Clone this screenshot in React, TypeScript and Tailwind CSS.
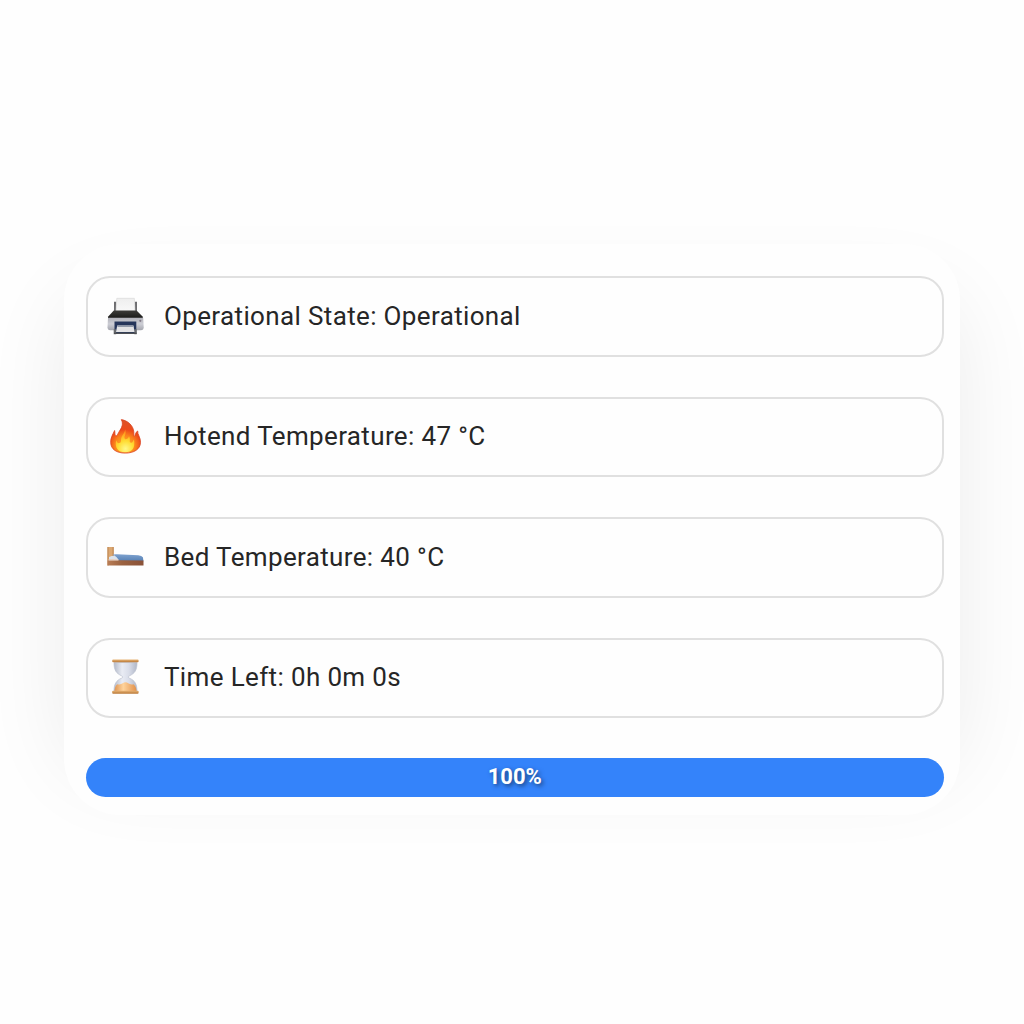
import type { ReactNode } from "react";

function PrinterIcon() {
  return (
    <svg viewBox="0 0 50 50" className="block size-[50px]" aria-hidden="true">
      <defs>
        <linearGradient id="printer-paper" x1="0" y1="0" x2="0" y2="1">
          <stop offset="0" stopColor="#eeeeee" />
          <stop offset="1" stopColor="#f8f8f8" />
        </linearGradient>
        <linearGradient id="printer-lid" x1="0" y1="0" x2="0" y2="1">
          <stop offset="0" stopColor="#3c3b38" />
          <stop offset="1" stopColor="#1a1a18" />
        </linearGradient>
        <linearGradient id="printer-body" x1="0" y1="0" x2="0" y2="1">
          <stop offset="0" stopColor="#b2b2ba" />
          <stop offset="0.5" stopColor="#cdced5" />
          <stop offset="1" stopColor="#a4a6ae" />
        </linearGradient>
      </defs>
      <path d="M14 10.8h2.2v10H14zM34.8 10.8H37v10h-2.2z" fill="#6d6d70" />
      <path d="M16.8 7.3h17.5l.7 13H16z" fill="url(#printer-paper)" stroke="#d5d5d5" strokeWidth=".6" />
      <path d="M13.8 19.6h22.8l6.2 6.2v1.5H8v-1.5z" fill="url(#printer-lid)" />
      <path d="M8 26.8h35.2l.5 9.4q0 3-2.8 3H10.3q-2.8 0-2.8-3z" fill="url(#printer-body)" />
      <path d="M14.5 30.5h21.8v12H14.5z" fill="#26365b" />
      <path d="M13.7 38.2h2.5v5h-2.5zM34.3 38.2h2.4v5h-2.4z" fill="#696b6e" />
      <path d="M17.2 34.5h16.3l1 6.5H16z" fill="#e4e4e6" />
      <path d="M17.7 34.5h15.4l.4 1.5H17.3z" fill="#939baa" />
      <path d="M14 41.6h22.6V43H14z" fill="#4e5054" />
      <circle cx="40.3" cy="29.8" r="1.1" fill="#837b88" />
    </svg>
  );
}

function FireIcon() {
  return (
    <svg viewBox="0 0 50 50" className="block size-[50px]" aria-hidden="true">
      <defs>
        <radialGradient id="flame-outer" cx="25" cy="34" r="27" gradientUnits="userSpaceOnUse">
          <stop offset="0" stopColor="#ffc32b" />
          <stop offset=".38" stopColor="#fb831c" />
          <stop offset=".6" stopColor="#ed4a1a" />
          <stop offset="1" stopColor="#d9542a" />
        </radialGradient>
        <radialGradient id="flame-inner" cx="25.5" cy="37" r="20" gradientUnits="userSpaceOnUse">
          <stop offset="0" stopColor="#fff98a" />
          <stop offset=".4" stopColor="#ffdc32" />
          <stop offset=".75" stopColor="#ffa420" />
          <stop offset="1" stopColor="#f9751c" />
        </radialGradient>
      </defs>
      <g transform="translate(0 .8)">
        <path
          d="M21.3 7.8C27.8 8.7 33.4 14 33.8 20c.2 2.5-.1 4.5.5 4.4 1.2-.2 1-4.3 3.4-5.2-.4 3.6 2.9 6.1 2.8 11.3C40.4 37.5 34 41.3 25.2 41.3S10.7 37.4 10.7 30.5c0-4.8 1.6-6.9 3.9-11.8.6 2.2-.1 4.5 1.2 5.2 1.4.7 1.7-1.6 3.4-4.2 2.5-3.8 4.5-7.2 2.1-11.9z"
          fill="url(#flame-outer)"
          stroke="#d94322"
          strokeWidth=".8"
        />
        <path
          d="M25.2 17.5c1.4 5-1 6.3-.7 8.7.4 2.6 3.8.9 4.5-1.8 2 3.2-.3 5.4 1.6 6.3 1.7.8 2.1-1.3 3.4-3 1.4 8.8-1.9 12.8-8.8 12.8-7.4 0-10.7-4.5-9-12 1.1 2.3 1.7 3.2 3.2 2.7 2.8-1 .7-4.1 2.7-7.1 1.2-1.9 2.7-3.6 3.1-6.6z"
          fill="url(#flame-inner)"
        />
      </g>
    </svg>
  );
}

function BedIcon() {
  return (
    <svg viewBox="0 0 50 50" className="block size-[50px]" aria-hidden="true">
      <defs>
        <linearGradient id="bed-wood" x1="0" y1="0" x2="1" y2="0">
          <stop offset="0" stopColor="#b97d55" />
          <stop offset=".4" stopColor="#9b6240" />
          <stop offset="1" stopColor="#8a5238" />
        </linearGradient>
        <linearGradient id="bed-blanket" x1="0" y1="0" x2="0" y2="1">
          <stop offset="0" stopColor="#7fa2cf" />
          <stop offset="1" stopColor="#5580b4" />
        </linearGradient>
      </defs>
      <path d="M7.6 15h6v13h-6z" fill="#dba771" />
      <path d="M7.4 15h1.2v18.5H7.4zM12.5 15h1.2v9h-1.2z" fill="#c18a57" />
      <path d="M9 27.8V25q3-1.8 9-1.2v4z" fill="#dbe3ec" />
      <path d="M12.3 23.1q1.5-1.2 5-.8l21 1q3.5.3 4.6 1.9l.6 4H18.8q-1-4.8-6.5-6.1z" fill="url(#bed-blanket)" />
      <path d="M7.5 28.2h11l25 .3v5.1H7.5z" fill="url(#bed-wood)" />
      <path d="M8.6 27.2h9.8v1.2H8.6z" fill="#e6cfc0" />
    </svg>
  );
}

function HourglassIcon() {
  return (
    <svg viewBox="0 0 50 50" className="block size-[50px]" aria-hidden="true">
      <defs>
        <linearGradient id="glass-bulb" x1="0" y1="0" x2="1" y2="0">
          <stop offset="0" stopColor="#b4bac9" />
          <stop offset=".35" stopColor="#e9ecf4" />
          <stop offset=".65" stopColor="#d9dde9" />
          <stop offset="1" stopColor="#b0b7c7" />
        </linearGradient>
        <linearGradient id="glass-sand" x1="0" y1="0" x2="1" y2="0">
          <stop offset="0" stopColor="#df9553" />
          <stop offset=".4" stopColor="#ffd39b" />
          <stop offset="1" stopColor="#e1914c" />
        </linearGradient>
        <linearGradient id="glass-cap" x1="0" y1="0" x2="0" y2="1">
          <stop offset="0" stopColor="#e7b577" />
          <stop offset="1" stopColor="#b97735" />
        </linearGradient>
      </defs>
      <path
        d="M14 10.5h23c0 8-2.3 10.8-7.5 13.3-1.8.8-1.8 1.6 0 2.4C35 28.6 37 32 37 39.5H14c0-7.5 2-10.9 7.5-13.3 1.8-.8 1.8-1.6 0-2.4C16.3 21.3 14 18.5 14 10.5z"
        fill="url(#glass-bulb)"
        stroke="#bac0cf"
        strokeWidth=".7"
      />
      <path d="M14.5 39.5c.1-3.6.9-5.6 2.8-7.3 4.7 1.1 5.6-1.9 8.2-1.9 2.5 0 3.6 3 8.1 1.9 2 1.9 2.8 3.7 2.9 7.3z" fill="url(#glass-sand)" />
      <rect x="12.2" y="7.6" width="26.4" height="2.6" rx=".9" fill="url(#glass-cap)" />
      <rect x="12.2" y="38.7" width="26.4" height="3" rx=".9" fill="url(#glass-cap)" />
    </svg>
  );
}

function StatusRow({ icon, children }: { icon: ReactNode; children: ReactNode }) {
  return (
    <div className="flex h-[80.5px] items-center rounded-[24px] border-2 border-[#e0e0e0] bg-[#fefefe] pb-[2px] pl-[12.5px]">
      {icon}
      <span className="ml-[14px] text-[26px] leading-none tracking-[0.36px] text-[#262626]">{children}</span>
    </div>
  );
}

export default function App() {
  return (
    <main className="h-screen overflow-hidden bg-[#fefefe] px-16 pt-[244px] font-['Roboto',sans-serif]">
      <section className="relative isolate h-[571px] px-[21.5px] pt-[32.25px]">
        <div className="absolute inset-x-0 top-[48px] bottom-[38px] -z-20 rounded-[56px] shadow-[0_0_84px_rgba(0,0,0,0.075)]" />
        <div className="absolute inset-0 -z-10 rounded-[56px] bg-[#fefefe]" />
        <div className="flex w-[858.5px] flex-col gap-10">
          <StatusRow icon={<PrinterIcon />}>Operational State: Operational</StatusRow>
          <StatusRow icon={<FireIcon />}>Hotend Temperature: 47 °C</StatusRow>
          <StatusRow icon={<BedIcon />}>Bed Temperature: 40 °C</StatusRow>
          <StatusRow icon={<HourglassIcon />}>Time Left: 0h 0m 0s</StatusRow>
          <div className="-mt-[0.5px] flex h-[39.5px] items-center justify-center rounded-full bg-[#3483fa] pb-[2px] text-[22px] leading-none font-bold text-white [text-shadow:2px_2px_4px_rgba(0,0,0,0.5)]">
            100%
          </div>
        </div>
      </section>
    </main>
  );
}
